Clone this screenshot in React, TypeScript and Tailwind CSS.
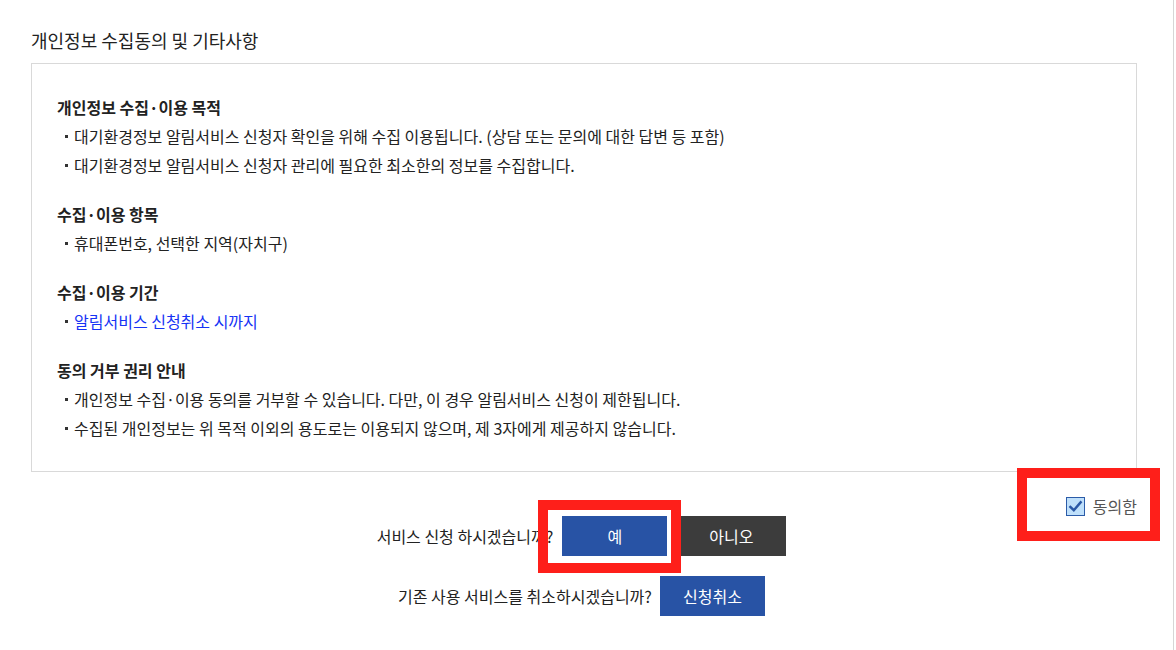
import React from 'react';

type Section = {
    title: string;
    items: { text: string; link?: boolean }[];
};

const sections: Section[] = [
    {
        title: '개인정보 수집·이용 목적',
        items: [
            { text: '대기환경정보 알림서비스 신청자 확인을 위해 수집 이용됩니다. (상담 또는 문의에 대한 답변 등 포함)' },
            { text: '대기환경정보 알림서비스 신청자 관리에 필요한 최소한의 정보를 수집합니다.' },
        ],
    },
    {
        title: '수집·이용 항목',
        items: [{ text: '휴대폰번호, 선택한 지역(자치구)' }],
    },
    {
        title: '수집·이용 기간',
        items: [{ text: '알림서비스 신청취소 시까지', link: true }],
    },
    {
        title: '동의 거부 권리 안내',
        items: [
            { text: '개인정보 수집·이용 동의를 거부할 수 있습니다. 다만, 이 경우 알림서비스 신청이 제한됩니다.' },
            { text: '수집된 개인정보는 위 목적 이외의 용도로는 이용되지 않으며, 제 3자에게 제공하지 않습니다.' },
        ],
    },
];

const App: React.FC = () => {
    return (
        <div
            className="relative w-[1174px] min-h-[650px] bg-white border-r border-[#d6d6d6] text-[#222]"
            style={{ fontFamily: '"Noto Sans CJK KR", "Noto Sans", sans-serif' }}
        >
            <div className="pl-[31px] w-[1137px]">
                {/* Title */}
                <h2 className="pt-[28px] mb-[11px] text-[18px] leading-[24px] font-normal">
                    개인정보 수집동의 및 기타사항
                </h2>

                {/* Terms box */}
                <div className="border border-[#d9d9d9] pt-[29px] pb-[28px] pl-[25px]">
                    {sections.map((s, i) => (
                        <div key={i} className={i > 0 ? 'mt-[20px]' : ''}>
                            <h3 className="text-[16px] leading-[29px] font-bold">{s.title}</h3>
                            <ul>
                                {s.items.map((it, j) => (
                                    <li key={j} className="flex items-center text-[16px] leading-[29px]">
                                        <span className="ml-[8px] mr-[6px] w-[3px] h-[3px] bg-[#333]" />
                                        <span className={it.link ? 'text-[#1633f5]' : ''}>{it.text}</span>
                                    </li>
                                ))}
                            </ul>
                        </div>
                    ))}
                </div>

                {/* Agree checkbox */}
                <div className="mt-[24px] h-[20px] flex items-center justify-end">
                    <label className="flex items-center gap-[8px] text-[16px] text-[#555]">
                        <span className="w-[19px] h-[19px] border border-[#2b5ba8] bg-[#bfe0fb] flex items-center justify-center">
                            <svg viewBox="0 0 16 16" className="w-[15px] h-[15px]">
                                <path d="M2.5 8.5 L6.2 12 L13.5 3.5" fill="none" stroke="#2a58a6" strokeWidth="2.6" strokeLinecap="square" />
                            </svg>
                        </span>
                        동의함
                    </label>
                </div>

                {/* Buttons */}
                <div className="flex items-center justify-center pr-[5px] text-[16px]">
                    <span>서비스 신청 하시겠습니까?</span>
                    <button className="ml-[9px] w-[105px] h-[40px] bg-[#2853a5] text-white">예</button>
                    <button className="ml-[9px] w-[110px] h-[40px] bg-[#3c3c3c] text-white">아니오</button>
                </div>
                <div className="mt-[20px] flex items-center justify-center pr-[5px] text-[16px]">
                    <span>기존 사용 서비스를 취소하시겠습니까?</span>
                    <button className="ml-[8px] w-[105px] h-[40px] bg-[#2853a5] text-white">신청취소</button>
                </div>
            </div>

            {/* Annotation highlights */}
            <div className="absolute left-[538px] top-[500px] w-[143px] h-[73px] border-[10px] border-[#fe1f1a] pointer-events-none" />
            <div className="absolute left-[1017px] top-[468px] w-[143px] h-[73px] border-[10px] border-[#fe1f1a] pointer-events-none" />
        </div>
    );
};

export default App;
